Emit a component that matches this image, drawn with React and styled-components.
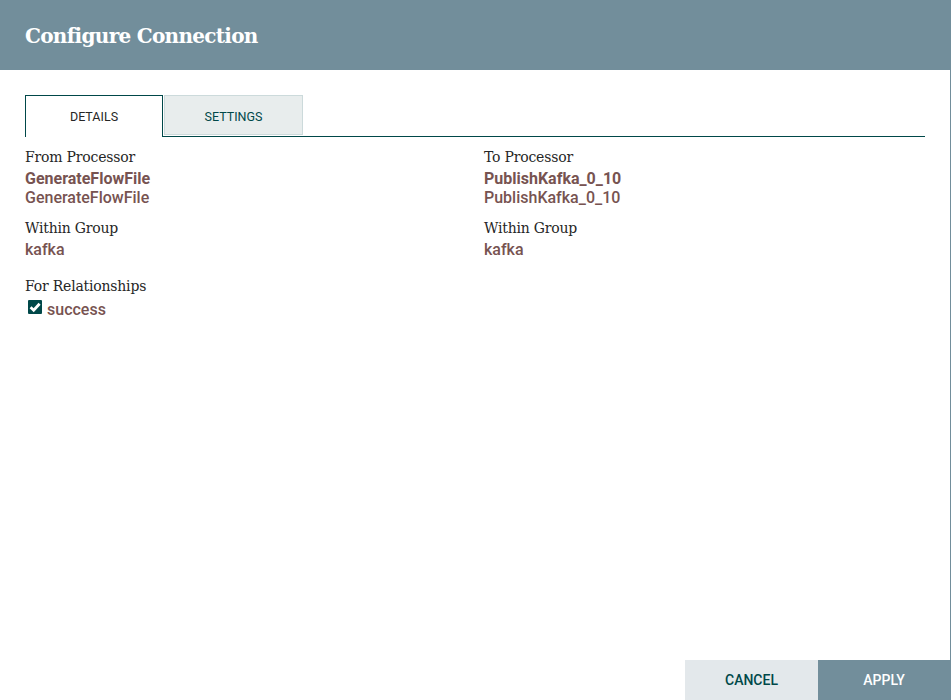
import React from "react"
import styled, { createGlobalStyle } from "styled-components"

const Global = createGlobalStyle`
  html, body {
    margin: 0;
    padding: 0;
    background: #ffffff;
  }
  #root {
    height: 700px;
  }
`

const Dialog = styled.div`
  width: 950px;
  height: 700px;
  border-right: 1px solid #728e9b;
  display: flex;
  flex-direction: column;
  background: #ffffff;
  font-family: Roboto, "Liberation Sans", sans-serif;
`

const Header = styled.div`
  height: 70px;
  flex: none;
  background: #728e9b;
  display: flex;
  align-items: center;
  padding-left: 25px;
  h1 {
    margin: 0;
    color: #ffffff;
    font-family: "DejaVu Serif", serif;
    font-weight: bold;
    font-size: 20px;
    letter-spacing: -0.7px;
    padding-top: 2px;
  }
`

const Body = styled.div`
  flex: 1;
  padding: 25px 25px 0 25px;
`

const TabBar = styled.div`
  display: flex;
  height: 41px;
  border-bottom: 1px solid #004849;
  width: 900px;
`

const Tab = styled.div`
  box-sizing: border-box;
  width: ${(p) => (p.$active ? "138px" : "139px")};
  height: ${(p) => (p.$active ? "42px" : "40px")};
  margin-left: ${(p) => (p.$active ? "0" : "1px")};
  display: flex;
  align-items: center;
  justify-content: center;
  font-size: 12.5px;
  font-weight: 400;
  text-transform: uppercase;
  color: ${(p) => (p.$active ? "#262626" : "#004849")};
  background: ${(p) => (p.$active ? "#ffffff" : "#e8eded")};
  border: 1px solid ${(p) => (p.$active ? "#004849" : "#ccdadb")};
  border-bottom: ${(p) => (p.$active ? "none" : "1px solid #ccdadb")};
  padding-top: ${(p) => (p.$active ? "0" : "3px")};
  position: relative;
  z-index: ${(p) => (p.$active ? 1 : 0)};
`

const Columns = styled.div`
  display: grid;
  grid-template-columns: 459px 1fr;
  padding-top: 10px;
`

const Field = styled.div`
  margin-bottom: ${(p) => (p.$gap || 11)}px;
`

const Label = styled.div`
  font-family: "DejaVu Serif", serif;
  font-size: 14px;
  color: #262626;
  line-height: 20px;
  letter-spacing: -0.2px;
  margin-bottom: 2px;
`

const Value = styled.div`
  font-size: 16px;
  line-height: 19px;
  color: #775351;
  font-weight: ${(p) => (p.$bold ? 700 : 500)};
`

const CheckRow = styled.div`
  display: flex;
  align-items: center;
  gap: 5px;
  padding-left: 3px;
  height: 22px;
  margin-top: 2px;
`

const Box = styled.span`
  width: 14px;
  height: 14px;
  margin-top: -4px;
  background: #004849;
  display: flex;
  align-items: center;
  justify-content: center;
  border-radius: 1px;
`

const Footer = styled.div`
  display: flex;
  justify-content: flex-end;
  height: 40px;
  flex: none;
`

const Button = styled.button`
  width: ${(p) => (p.$primary ? "132px" : "133px")};
  height: 40px;
  border: none;
  margin: 0;
  font-family: Roboto, "Liberation Sans", sans-serif;
  font-size: 14px;
  font-weight: 500;
  text-transform: uppercase;
  color: ${(p) => (p.$primary ? "#ffffff" : "#004849")};
  background: ${(p) => (p.$primary ? "#728e9b" : "#e3e8eb")};
  cursor: pointer;
`

const App = () => {
  return (
    <>
      <Global />
      <Dialog>
        <Header>
          <h1>Configure Connection</h1>
        </Header>
        <Body>
          <TabBar>
            <Tab $active>Details</Tab>
            <Tab>Settings</Tab>
          </TabBar>
          <Columns>
            <div>
              <Field>
                <Label>From Processor</Label>
                <Value $bold>GenerateFlowFile</Value>
                <Value>GenerateFlowFile</Value>
              </Field>
              <Field $gap={17}>
                <Label>Within Group</Label>
                <Value>kafka</Value>
              </Field>
              <Field>
                <Label>For Relationships</Label>
                <CheckRow>
                  <Box>
                    <svg width="12" height="12" viewBox="0 0 12 12">
                      <path d="M1.6 6.2 L4.7 9.2 L10.6 2.8" fill="none" stroke="#ffffff" strokeWidth="2.8" />
                    </svg>
                  </Box>
                  <Value>success</Value>
                </CheckRow>
              </Field>
            </div>
            <div>
              <Field>
                <Label>To Processor</Label>
                <Value $bold>PublishKafka_0_10</Value>
                <Value>PublishKafka_0_10</Value>
              </Field>
              <Field>
                <Label>Within Group</Label>
                <Value>kafka</Value>
              </Field>
            </div>
          </Columns>
        </Body>
        <Footer>
          <Button>Cancel</Button>
          <Button $primary>Apply</Button>
        </Footer>
      </Dialog>
    </>
  )
}

export default App
